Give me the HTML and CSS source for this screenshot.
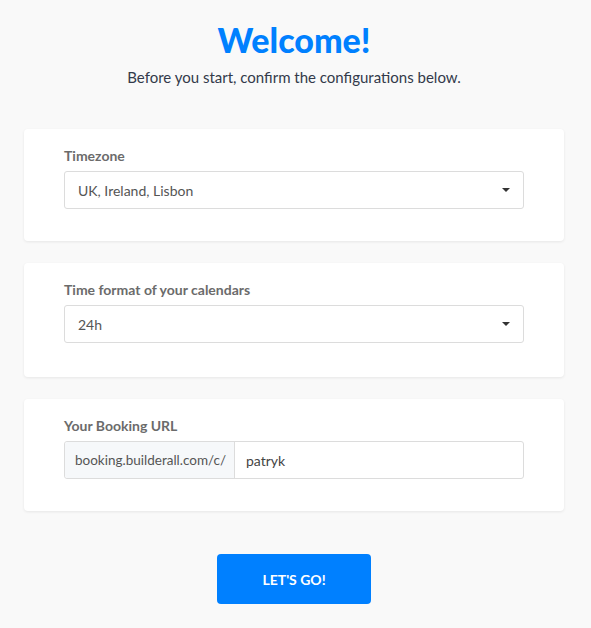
FILE: index.html
```html
<!DOCTYPE html>
<html lang="en">
<head>
<meta charset="utf-8">
<title>Welcome</title>
<link rel="stylesheet" href="styles.css">
</head>
<body>
<main class="page">
  <header class="intro">
    <h1 class="title">Welcome!</h1>
    <p class="subtitle">Before you start, confirm the configurations below.</p>
  </header>

  <section class="card">
    <label class="label">Timezone</label>
    <div class="select">
      <span class="select-value">UK, Ireland, Lisbon</span>
      <span class="caret"></span>
    </div>
  </section>

  <section class="card card-tall">
    <label class="label">Time format of your calendars</label>
    <div class="select">
      <span class="select-value">24h</span>
      <span class="caret"></span>
    </div>
  </section>

  <section class="card">
    <label class="label">Your Booking URL</label>
    <div class="input-group">
      <span class="prefix">booking.builderall.com/c/</span>
      <span class="input-value">patryk</span>
    </div>
  </section>

  <div class="actions">
    <button class="btn">LET'S GO!</button>
  </div>
</main>
</body>
</html>
```

FILE: styles.css
```css
* { box-sizing: border-box; }
html, body {
  margin: 0;
  padding: 0;
  background: #f9f9f9;
}
body {
  font-family: "Lato", "Noto Sans", sans-serif;
  color: #333;
}
.page {
  width: 540px;
  margin: 0 0 0 24px;
  padding-top: 18px;
  display: flex;
  flex-direction: column;
}
.intro {
  text-align: center;
  margin-bottom: 42px;
}
.title {
  margin: 0;
  font-size: 34px;
  line-height: 44px;
  font-weight: 900;
  color: #0080ff;
}
.subtitle {
  margin: 5px 0 0;
  font-size: 15px;
  line-height: 20px;
  color: #333a4a;
}
.card {
  background: #fff;
  border-radius: 4px;
  box-shadow: 0 1px 3px rgba(0,0,0,0.08);
  padding: 19px 40px 32px;
  margin-bottom: 22px;
  display: flex;
  flex-direction: column;
}
.card-tall {
  padding-bottom: 34px;
}
.label {
  font-size: 14px;
  font-weight: 700;
  line-height: 16px;
  color: #6b6b6b;
  margin-bottom: 7px;
}
.select {
  height: 38px;
  border: 1px solid #dcdcdc;
  border-radius: 3px;
  display: flex;
  align-items: center;
  padding: 0 13px;
  font-size: 14px;
  color: #555;
}
.select-value { flex: 1; }
.caret {
  width: 0;
  height: 0;
  border-left: 4px solid transparent;
  border-right: 4px solid transparent;
  border-top: 4px solid #333;
}
.input-group {
  height: 38px;
  display: flex;
  border: 1px solid #dcdcdc;
  border-radius: 3px;
  font-size: 14px;
}
.prefix {
  width: 170px;
  background: #f6f8fa;
  border-right: 1px solid #dcdcdc;
  display: flex;
  align-items: center;
  padding-left: 10px;
  color: #555;
  border-radius: 3px 0 0 3px;
  font-size: 13.5px;
}
.input-value {
  flex: 1;
  display: flex;
  align-items: center;
  padding-left: 11px;
  color: #444;
}
.actions {
  display: flex;
  justify-content: center;
  margin-top: 21px;
}
.btn {
  width: 154px;
  height: 50px;
  border: 0;
  border-radius: 4px;
  background: #0080ff;
  color: #fff;
  font-family: inherit;
  font-size: 14px;
  font-weight: 700;
}
```
